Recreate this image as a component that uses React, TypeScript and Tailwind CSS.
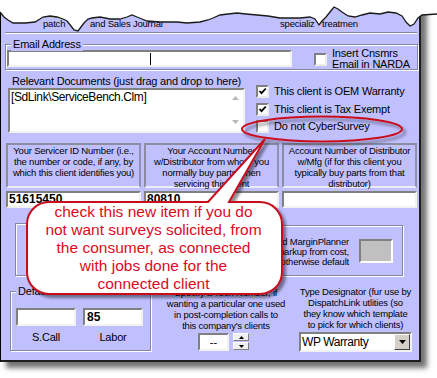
import React from "react";

const sunken =
  "bg-white border-2 border-t-[#808080] border-l-[#808080] border-r-[#f2f2f2] border-b-[#f2f2f2]";
const etched =
  "border border-[#8585a5] shadow-[inset_1px_1px_0_#ffffff,1px_1px_0_#ffffff]";

function Check({ checked, className = "" }: { checked?: boolean; className?: string }) {
  return (
    <div
      className={
        "w-[13px] h-[13px] shrink-0 bg-white border-2 border-t-[#808080] border-l-[#808080] border-r-[#ececec] border-b-[#ececec] flex items-center justify-center " +
        className
      }
    >
      {checked && (
        <svg width="9" height="9" viewBox="0 0 9 9">
          <path d="M1.5 4 L3.5 6.2 L7.8 1.5" stroke="#000" strokeWidth="1.8" fill="none" />
        </svg>
      )}
    </div>
  );
}

const tornPts: [number, number][] = [
  [0, 12], [4, 17], [8, 20], [13, 23], [25, 23], [35, 22], [40, 19], [43, 17], [50, 16], [57, 17],
  [63, 19], [67, 21], [71, 26], [74, 30], [78, 31], [81, 27], [84, 23], [88, 19], [92, 18], [100, 17],
  [110, 19], [120, 19], [127, 17], [132, 15], [137, 17], [142, 19], [147, 21], [160, 22], [177, 22],
  [187, 23], [200, 22], [208, 20], [213, 18], [220, 15], [228, 14], [237, 13], [246, 14], [257, 15],
  [268, 16], [280, 18], [290, 18], [300, 18], [310, 17], [315, 19], [319, 25], [322, 21], [326, 17],
  [330, 12], [334, 7], [338, 9], [342, 12], [348, 16], [355, 17], [362, 15], [370, 13], [380, 14],
  [388, 12], [396, 13], [402, 16], [406, 22], [410, 26], [414, 24], [418, 18], [422, 15], [437, 14],
];

function Torn() {
  const line = tornPts.map((p, i) => (i === 0 ? "M" : "L") + p[0] + " " + p[1]).join(" ");
  const fill = line + " L437 0 L0 0 Z";
  return (
    <svg className="absolute left-0 top-0" width="437" height="40" viewBox="0 0 437 40">
      <path d={fill} fill="#ffffff" />
      <path d={line} fill="none" stroke="#1a1a1a" strokeWidth="1.3" />
    </svg>
  );
}

function Callout() {
  return (
    <>
      <svg className="absolute left-0 top-0 pointer-events-none" width="437" height="378" viewBox="0 0 437 378">
        <defs>
          <filter id="sh" x="-10%" y="-20%" width="130%" height="150%">
            <feDropShadow dx="3" dy="3" stdDeviation="1.5" floodColor="#000" floodOpacity="0.45" />
          </filter>
        </defs>
        <ellipse cx="322" cy="129" rx="80" ry="12.5" fill="none" stroke="#c8101e" strokeWidth="2" filter="url(#sh)" />
        <path
          d="M49 202 H208 L265 139 L229 202 H260 A22 22 0 0 1 282 224 V272 A22 22 0 0 1 260 294 H49 A22 22 0 0 1 27 272 V224 A22 22 0 0 1 49 202 Z"
          fill="#ffffff"
          stroke="#c8101e"
          strokeWidth="2"
          filter="url(#sh)"
        />
      </svg>
      <div className="absolute left-[27px] top-[203px] w-[253px] flex flex-col items-center text-[15.5px] leading-[18px] text-[#dc0a1e] whitespace-nowrap">
        <div>check this new item if you do</div>
        <div>not want surveys solicited, from</div>
        <div>the consumer, as connected</div>
        <div>with jobs done for the</div>
        <div>connected client</div>
      </div>
    </>
  );
}

function Tri({ dir }: { dir: "up" | "down" }) {
  return (
    <svg width="5" height="3" viewBox="0 0 5 3">
      <path d={dir === "up" ? "M0 3 L2.5 0 L5 3 Z" : "M0 0 L5 0 L2.5 3 Z"} fill="#000" />
    </svg>
  );
}

export default function App() {
  const small = "text-[9.5px] leading-[11px] tracking-[-0.2px]";
  const label = "text-[11px] leading-[13px] tracking-[-0.2px]";
  return (
    <div className="relative w-[437px] h-[378px] bg-white overflow-hidden font-['Liberation_Sans',Arial,sans-serif] text-black">
      <div className="w-[421px] h-[362px] bg-[#c0c0ff] border-l border-l-black border-r-2 border-r-[#1e1e1e] border-b-2 border-b-[#1e1e1e] shadow-[6px_6px_5px_rgba(0,0,0,0.55)] flex flex-col">
        {/* tab strip fragment */}
        <div className="h-[32px] shrink-0 flex items-start pt-[17px] text-[9.5px] leading-[13px] tracking-[-0.2px] whitespace-nowrap">
          <span className="ml-[42px] w-[24px] overflow-hidden">patch</span>
          <span className="ml-[23px] w-[76px] overflow-hidden">and Sales Journal</span>
          <span className="ml-[114px] w-[38px] overflow-hidden">specializ</span>
          <span className="ml-[4px] w-[38px] overflow-hidden">treatmen</span>
        </div>
        <div className="ml-[4px] mr-[2px] h-[2px] shrink-0 border-t border-t-[#8080a0] border-b border-b-white" />

        {/* email group */}
        <div className={"relative mt-[10px] ml-[4px] w-[413px] h-[26px] shrink-0 flex items-start " + etched}>
          <span className={"absolute left-[5px] top-[-7px] px-[2px] bg-[#c0c0ff] " + label}>Email Address</span>
          <div className={sunken + " ml-[1px] mt-[5px] w-[285px] h-[17px] flex items-center"}>
            <span className="ml-[141px] w-px h-[12px] bg-black" />
          </div>
          <Check className="ml-[22px] mt-[8px]" />
          <div className="ml-[5px] mt-[3px] text-[11px] leading-[10.5px] tracking-[-0.2px]">
            <div>Insert Cnsmrs</div>
            <div>Email in NARDA</div>
          </div>
        </div>

        {/* relevant docs + checkboxes */}
        <div className="flex mt-[5px] h-[58px] shrink-0">
          <div className="ml-[7px] w-[237px]">
            <div className={"pl-[4px] whitespace-nowrap " + label}>Relevant Documents (just drag and drop to here)</div>
            <div className={sunken + " h-[45px] w-[237px] flex"}>
              <div className="flex-1 pl-[1px] text-[12px] leading-[14px] tracking-[-0.4px]">{"[SdLink\\ServiceBench.Clm]"}</div>
              <div className="w-[15px] flex flex-col justify-between items-center pt-[6px] pb-[7px]">
                <svg width="7" height="4" viewBox="0 0 7 4"><path d="M0 4 L3.5 0 L7 4 Z" fill="#b8b8b8" /></svg>
                <svg width="7" height="4" viewBox="0 0 7 4"><path d="M0 0 L7 0 L3.5 4 Z" fill="#b8b8b8" /></svg>
              </div>
            </div>
          </div>
          <div className="ml-[11px] pt-[10px] flex flex-col">
            <div className="h-[18px] flex items-start">
              <Check checked />
              <span className={"ml-[5px] " + label}>This client is OEM Warranty</span>
            </div>
            <div className="h-[18px] flex items-start">
              <Check checked />
              <span className={"ml-[5px] " + label}>This client is Tax Exempt</span>
            </div>
            <div className="h-[13px] flex items-start">
              <Check />
              <span className={"ml-[5px] " + label}>Do not CyberSurvey</span>
            </div>
          </div>
        </div>

        {/* header cells */}
        <div className="flex gap-[3px] ml-[5px] mt-[10px] shrink-0">
          {[
            ["Your Servicer ID Number (i.e.,", "the number or code, if any, by", "which this client identifies you)"],
            ["Your Account Number", "w/Distributor from whom you", "normally buy parts when", "servicing this client"],
            ["Account Number of Distributor", "w/Mfg (if for this client you", "typically buy parts from that", "distributor)"],
          ].map((lines, i) => (
            <div
              key={i}
              className={
                "w-[135px] h-[45px] border-2 border-t-[#8c8ca4] border-l-[#8c8ca4] border-r-[#9090b0] border-b-[#ececff] text-center whitespace-nowrap " +
                small
              }
            >
              {lines.map((l, j) => (
                <div key={j}>{l}</div>
              ))}
            </div>
          ))}
        </div>

        {/* inputs row */}
        <div className="flex gap-[3px] ml-[5px] mt-[3px] shrink-0">
          <div className={sunken + " w-[135px] h-[17px] pl-[1px] text-[12px] leading-[13px] font-bold"}>51615450</div>
          <div className={sunken + " w-[135px] h-[17px] pl-[1px] text-[12px] leading-[13px] font-bold"}>80810</div>
          <div className={sunken + " w-[135px] h-[17px]"} />
        </div>

        {/* middle groups */}
        <div className="flex items-start mt-[15px] shrink-0">
          <div className={"ml-[14px] w-[136px] h-[53px] " + etched} />
          <div className={"ml-[2px] mt-[2px] w-[250px] h-[51px] flex justify-end items-start " + etched}>
            <div className={"mt-[11px] text-right whitespace-nowrap text-[9.5px] leading-[10px] tracking-[-0.2px]"}>
              <div>Add MarginPlanner</div>
              <div>markup from cost,</div>
              <div>otherwise default</div>
            </div>
            <div className="ml-[10px] mt-[13px] mr-[9px] w-[34px] h-[24px] bg-[#c0c0c0] border-2 border-t-[#808080] border-l-[#808080] border-r-white border-b-white" />
          </div>
        </div>

        {/* bottom row */}
        <div className="flex items-start mt-[9px] shrink-0">
          <div className={"relative ml-[9px] mt-[6px] w-[141px] h-[60px] flex flex-col " + etched}>
            <span className={"absolute left-[5px] top-[-7px] px-[2px] bg-[#c0c0ff] " + label}>Default Rates</span>
            <div className="flex gap-[7px] pl-[5px] mt-[16px]">
              <div className={sunken + " w-[60px] h-[18px]"} />
              <div className={sunken + " w-[60px] h-[18px] pl-[2px] text-[12px] leading-[14px] font-bold"}>85</div>
            </div>
            <div className="flex gap-[7px] pl-[5px] mt-[6px] text-[11px] leading-[11px] tracking-[-0.2px]">
              <div className="w-[60px] text-center">S.Call</div>
              <div className="w-[60px] text-center">Labor</div>
            </div>
          </div>

          <div className="ml-[1px] w-[148px] mt-[2px] flex flex-col">
            <div className={"text-center whitespace-nowrap " + small}>
              <div>Specify a Tech Number, if</div>
              <div>wanting a particular one used</div>
              <div>in post-completion calls to</div>
              <div>this company's clients</div>
            </div>
            <div className="flex ml-[46px] mt-[2px]">
              <div className={sunken + " w-[31px] h-[18px] flex items-center justify-center text-[11px] leading-[12px]"}>--</div>
              <div className="ml-[4px] flex flex-col gap-[1px]">
                <div className="w-[16px] h-[8px] bg-[#efefef] border border-t-white border-l-white border-r-[#808080] border-b-[#808080] flex items-center justify-center">
                  <Tri dir="up" />
                </div>
                <div className="w-[16px] h-[8px] bg-[#efefef] border border-t-white border-l-white border-r-[#808080] border-b-[#808080] flex items-center justify-center">
                  <Tri dir="down" />
                </div>
              </div>
            </div>
          </div>

          <div className="ml-[-1px] w-[113px] mt-[1px] flex flex-col">
            <div className={"text-center whitespace-nowrap " + small}>
              <div>Type Designator (fur use by</div>
              <div>DispatchLink utlities (so</div>
              <div>they know which template</div>
              <div>to pick for which clients)</div>
            </div>
            <div className={sunken + " mt-[2px] h-[20px] w-[113px] flex items-center"}>
              <span className="flex-1 pl-[1px] text-[12px] leading-[14px] tracking-[-0.4px]">WP Warranty</span>
              <div className="w-[16px] h-[16px] bg-[#d4d0c8] border border-t-white border-l-white border-r-[#404040] border-b-[#404040] flex items-center justify-center">
                <svg width="7" height="4" viewBox="0 0 7 4"><path d="M0 0 L7 0 L3.5 4 Z" fill="#000" /></svg>
              </div>
            </div>
          </div>
        </div>
      </div>

      <Torn />
      <Callout />
    </div>
  );
}
